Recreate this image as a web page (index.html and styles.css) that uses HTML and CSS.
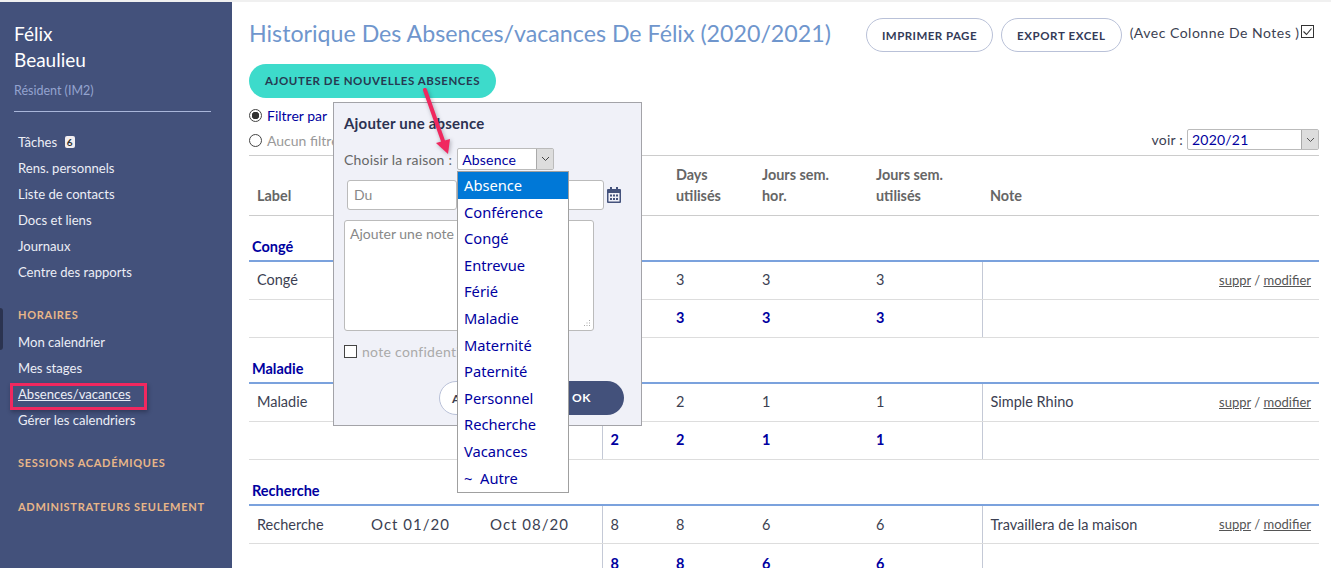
FILE: index.html
```html
<!DOCTYPE html>
<html>

  <head>
    <meta charset="UTF-8">
    <title>Historique des absences</title>
    <link rel="stylesheet" href="styles.css">
  </head>

  <body>
    <div id="wrap">
      <div id="side">
        <div class="who">Félix<br>Beaulieu</div>
        <div class="role">Résident (IM2)</div>
        <div class="side-line"></div>
        <ul class="nav">
          <li>Tâches <span class="badge">6</span></li>
          <li>Rens. personnels</li>
          <li>Liste de contacts</li>
          <li>Docs et liens</li>
          <li>Journaux</li>
          <li>Centre des rapports</li>
        </ul>
        <div class="nav-title first">HORAIRES</div>
        <ul class="nav">
          <li>Mon calendrier</li>
          <li>Mes stages</li>
          <li class="current">Absences/vacances</li>
          <li>Gérer les calendriers</li>
        </ul>
        <div class="nav-title second">SESSIONS ACADÉMIQUES</div>
        <div class="nav-title third">ADMINISTRATEURS SEULEMENT</div>
        <div class="side-tab"></div>
        <div class="mark"></div>
      </div>

      <div id="main">
        <div class="top">
          <h1>Historique Des Absences/vacances De Félix (2020/2021)</h1>
          <div class="btn print">IMPRIMER PAGE</div>
          <div class="btn">EXPORT EXCEL</div>
          <div class="notes">(Avec Colonne De Notes )<span class="tick"><svg width="13" height="13" viewBox="0 0 13 13"><rect x="0.5" y="0.5" width="12" height="12" fill="#fff" stroke="#333"/><path d="M2.5 6.5l3 3 5-6" fill="none" stroke="#333" stroke-width="1.1"/></svg></span></div>
        </div>
        <div class="add">AJOUTER DE NOUVELLES ABSENCES</div>
        <div class="filters">
          <div class="radios">
            <div class="radio-row on"><span class="radio"></span>Filtrer par</div>
            <div class="radio-row"><span class="radio"></span>Aucun filtre</div>
          </div>
          <div class="voir">voir :
            <div class="pick year"><span>2020/21</span><span class="pick-arrow"><svg width="9" height="6" viewBox="0 0 9 6"><path d="M1 1l3.5 3.5L8 1" fill="none" stroke="#555"/></svg></span></div>
          </div>
        </div>

        <table class="list">
          <colgroup>
            <col class="c-label"><col class="c-date"><col class="c-date2"><col class="c-num"><col class="c-days"><col class="c-hor"><col class="c-use"><col>
          </colgroup>
          <tr class="head">
            <th>Label</th><th>Du</th><th>Au</th><th>Days</th><th>Days<br>utilisés</th><th>Jours sem.<br>hor.</th><th>Jours sem.<br>utilisés</th><th>Note</th>
          </tr>
          <tr class="group"><td colspan="8">Congé</td></tr>
          <tr>
            <td>Congé</td><td></td><td></td><td class="sep"></td><td>3</td><td>3</td><td>3</td>
            <td class="sep"><div class="cell-note"><span></span><a class="acts"><u>suppr</u> / <u>modifier</u></a></div></td>
          </tr>
          <tr class="sum">
            <td></td><td></td><td></td><td class="sep"></td><td>3</td><td>3</td><td>3</td><td class="sep"></td>
          </tr>
          <tr class="group"><td colspan="8">Maladie</td></tr>
          <tr>
            <td>Maladie</td><td></td><td></td><td class="sep"></td><td>2</td><td>1</td><td>1</td>
            <td class="sep"><div class="cell-note"><span>Simple Rhino</span><a class="acts"><u>suppr</u> / <u>modifier</u></a></div></td>
          </tr>
          <tr class="sum">
            <td></td><td></td><td></td><td class="sep">2</td><td>2</td><td>1</td><td>1</td><td class="sep"></td>
          </tr>
          <tr class="group"><td colspan="8">Recherche</td></tr>
          <tr class="low">
            <td>Recherche</td><td class="date">Oct 01/20</td><td class="date">Oct 08/20</td><td class="sep">8</td><td>8</td><td>6</td><td>6</td>
            <td class="sep"><div class="cell-note"><span>Travaillera de la maison</span><a class="acts"><u>suppr</u> / <u>modifier</u></a></div></td>
          </tr>
          <tr class="sum low">
            <td></td><td></td><td></td><td class="sep">8</td><td>8</td><td>6</td><td>6</td><td class="sep"></td>
          </tr>
        </table>
      </div>

      <!-- fenetre ajout -->
      <div id="dialog">
        <div class="dlg-title">Ajouter une absence</div>
        <div class="dlg-reason">Choisir la raison :
          <div class="pick reason"><span>Absence</span><span class="pick-arrow"><svg width="9" height="6" viewBox="0 0 9 6"><path d="M1 1l3.5 3.5L8 1" fill="none" stroke="#444"/></svg></span></div>
        </div>
        <div class="dlg-dates">
          <div class="field">Du</div>
          <div class="field wide"></div>
          <svg class="cal" width="14" height="16" viewBox="0 0 14 16"><path fill="#44527c" d="M3 0h2v2h4V0h2v2h2a1 1 0 0 1 1 1v12a1 1 0 0 1-1 1H1a1 1 0 0 1-1-1V3a1 1 0 0 1 1-1h2zM1.5 6v8.500h11V6z"/><path fill="#44527c" d="M3 7.500h2v2H3zM6 7.500h2v2H6zM9 7.500h2v2H9zM3 11h2v2H3zM6 11h2v2H6zM9 11h2v2H9z"/></svg>
        </div>
        <div class="note">Ajouter une note
          <svg class="grip" width="9" height="9" viewBox="0 0 9 9"><path fill="#aaa" d="M7 1h1v1H7zM4.500 3.500h1v1h-1zM7 3.500h1v1H7zM2 6h1v1H2zM4.500 6h1v1h-1zM7 6h1v1H7z"/></svg>
        </div>
        <div class="conf"><span class="box"></span>note confidentielle</div>
        <div class="dlg-btns">
          <div class="cancel">Annuler</div>
          <div class="ok">OK</div>
        </div>
      </div>

      <ul id="drop">
        <li class="sel">Absence</li>
        <li>Conférence</li>
        <li>Congé</li>
        <li>Entrevue</li>
        <li>Férié</li>
        <li>Maladie</li>
        <li>Maternité</li>
        <li>Paternité</li>
        <li>Personnel</li>
        <li>Recherche</li>
        <li>Vacances</li>
        <li>~&nbsp; Autre</li>
      </ul>

      <svg id="arrow" width="40" height="70" viewBox="0 0 40 70"><path d="M4 3l18 51" fill="none" stroke="#f0285f" stroke-width="4" stroke-linecap="round"/><path d="M15 56l14-4-2 15z" fill="#f0285f"/></svg>
    </div>
  </body>

</html>
```

FILE: styles.css
```css
html, body {
  margin: 0;
  padding: 0;
}

body {
  font-family: "Lato", "Noto Sans", sans-serif;
  font-size: 14px;
  color: #3c3f52;
  background: #fff;
}

#wrap {
  position: relative;
  display: flex;
  width: 1331px;
  height: 568px;
  overflow: hidden;
  border-top: 2px solid #f0f0f0;
  box-sizing: border-box;
}

/* menu gauche */
#side {
  position: relative;
  width: 232px;
  flex-shrink: 0;
  padding: 19px 21px 0 14px;
  box-sizing: border-box;
  background: #43517b;
  color: #eceef6;
}

.who {
  font-size: 19px;
  line-height: 26px;
  color: #fff;
}

.role {
  margin-top: 9px;
  font-size: 12.500px;
  line-height: 18px;
  color: #94a3cf;
}

.side-line {
  height: 1px;
  margin: 11px 0 0;
  background: #a9b6da;
}

.nav {
  list-style: none;
  margin: 0;
  padding: 0 0 0 4px;
}

.side-line + .nav {
  margin-top: 17px;
}

.nav li {
  height: 26px;
  font-size: 13.100px;
  line-height: 26px;
  white-space: nowrap;
}

.nav .current {
  text-decoration: underline;
}

.badge {
  display: inline-block;
  width: 10px;
  height: 12px;
  margin-left: 4px;
  border-radius: 2px;
  background: #f2eef0;
  color: #333;
  font-size: 10px;
  font-weight: 700;
  line-height: 12px;
  text-align: center;
  vertical-align: 1px;
}

.nav-title {
  padding-left: 4px;
  font-size: 11px;
  font-weight: 700;
  line-height: 16px;
  letter-spacing: 0.7px;
  color: #e8b688;
  white-space: nowrap;
}

.nav-title.first {
  margin: 22px 0 6px;
}

.nav-title.second {
  margin-top: 22px;
}

.nav-title.third {
  margin-top: 28px;
}

.side-tab {
  position: absolute;
  left: 0;
  top: 306px;
  width: 3px;
  height: 42px;
  border-radius: 0 3px 3px 0;
  background: #2b3350;
}

.mark {
  position: absolute;
  left: 10px;
  top: 381px;
  width: 137px;
  height: 27px;
  box-sizing: border-box;
  border: 3px solid #f0285f;
  box-shadow: 1px 2px 4px rgba(20, 20, 40, 0.4);
}

/* contenu */
#main {
  flex: 1;
  min-width: 0;
  padding: 0 12px 0 17px;
}

.top {
  display: flex;
  align-items: flex-start;
  height: 62px;
}

h1 {
  margin: 16px 0 0;
  width: 617px;
  font-size: 23.200px;
  font-weight: 400;
  line-height: 30px;
  color: #6f96cd;
  white-space: nowrap;
}

.btn {
  height: 32px;
  margin: 16px 8px 0 0;
  padding: 0 15px;
  border: 1px solid #b9c1d8;
  border-radius: 17px;
  font-size: 11.500px;
  font-weight: 700;
  line-height: 33px;
  letter-spacing: 0.6px;
  color: #343b58;
  white-space: nowrap;
}

.btn.print {
  letter-spacing: 0.45px;
}

.notes {
  margin: 22px 0 0 0;
  font-size: 14px;
  line-height: 18px;
  letter-spacing: 0.5px;
  white-space: nowrap;
}

.tick {
  display: inline-block;
  margin-left: 1px;
  vertical-align: 0;
}

.add {
  width: 247px;
  height: 34px;
  border-radius: 17px;
  background: #3ddbcb;
  color: #263a52;
  font-size: 11.500px;
  font-weight: 700;
  line-height: 34px;
  letter-spacing: 0.55px;
  text-align: center;
  white-space: nowrap;
}

.filters {
  display: flex;
  justify-content: space-between;
  align-items: flex-end;
  height: 57px;
  border-bottom: 1px solid #ccc;
}

.radios {
  padding-bottom: 2px;
}

.radio-row {
  display: flex;
  align-items: center;
  height: 25px;
  color: #999;
}

.radio-row.on {
  color: #0000a0;
}

.radio {
  width: 11px;
  height: 11px;
  margin-right: 5px;
  border: 1px solid #444;
  border-radius: 50%;
  background: #fff;
}

.on .radio {
  background: radial-gradient(circle, #333 3.500px, #fff 4px);
}

.voir {
  display: flex;
  align-items: center;
  padding-bottom: 5px;
  font-size: 14px;
  letter-spacing: 0.2px;
}

.pick {
  display: flex;
  justify-content: space-between;
  box-sizing: border-box;
  background: #fff;
  border: 1px solid #bbb;
  border-radius: 2px;
  color: #0000a0;
  font-size: 14px;
}

.pick span:first-child {
  padding-left: 4px;
}

.pick-arrow {
  display: flex;
  align-items: center;
  justify-content: center;
  width: 16px;
  background: #ddd;
  border-left: 1px solid #aaa;
}

.year {
  width: 132px;
  height: 21px;
  margin-left: 4px;
  line-height: 19px;
}

.list {
  width: 1070px;
  table-layout: fixed;
  border-collapse: collapse;
}

.c-label { width: 114px; }
.c-date { width: 119px; }
.c-date2 { width: 120px; }
.c-num { width: 66px; }
.c-days { width: 86px; }
.c-hor { width: 114px; }
.c-use { width: 114px; }

.list th {
  height: 59px;
  padding: 0 8px 9px;
  border-bottom: 1px solid #ccc;
  font-size: 14.400px;
  line-height: 21px;
  font-weight: 700;
  color: #666;
  text-align: left;
  vertical-align: bottom;
  box-sizing: border-box;
}

.list td {
  height: 38px;
  padding: 0 8px 1px;
  border-bottom: 1px solid #ddd;
  box-sizing: border-box;
  font-size: 14.500px;
  white-space: nowrap;
}

.list .low td {
  padding-bottom: 0;
}

.list .sum.low td {
  padding-top: 2px;
}

.list .date {
  font-size: 15px;
  letter-spacing: 1px;
}

.list .group td {
  height: 46px;
  padding: 0 3px 5px;
  border-bottom: 2px solid #7ba2dd;
  font-weight: 700;
  color: #0000a0;
  vertical-align: bottom;
}

.list .sep {
  border-left: 1px solid #c4c9d6;
}

.sum td {
  font-weight: 700;
  color: #0000a0;
}

.cell-note {
  display: flex;
  justify-content: space-between;
  align-items: center;
}

.acts {
  font-size: 13px;
  color: #555;
}

/* fenetre */
#dialog {
  position: absolute;
  left: 333px;
  top: 100px;
  width: 309px;
  height: 324px;
  box-sizing: border-box;
  padding: 10px 10px 0;
  background: #f0f1f8;
  border: 1px solid #a3a3a8;
}

.dlg-title {
  font-size: 15px;
  font-weight: 700;
  line-height: 20px;
  color: #2c3252;
  letter-spacing: 0.2px;
}

.dlg-reason {
  display: flex;
  align-items: center;
  margin-top: 15px;
  color: #666;
  letter-spacing: 0.2px;
}

.reason {
  width: 97px;
  height: 22px;
  margin-left: 5px;
  line-height: 21px;
}

.dlg-dates {
  display: flex;
  align-items: center;
  gap: 0;
  margin: 10px 0 0 3px;
}

.field {
  width: 110px;
  height: 30px;
  box-sizing: border-box;
  padding-left: 6px;
  border: 1px solid #bbb;
  border-radius: 3px;
  background: #fff;
  color: #888;
  line-height: 28px;
}

.field.wide {
  width: 147px;
}

.cal {
  margin-left: 3px;
}

.note {
  position: relative;
  width: 250px;
  height: 111px;
  margin-top: 10px;
  box-sizing: border-box;
  padding: 4px 5px;
  border: 1px solid #bbb;
  border-radius: 3px;
  background: #fff;
  color: #888;
}

.grip {
  position: absolute;
  right: 2px;
  bottom: 2px;
}

.conf {
  display: flex;
  align-items: center;
  height: 18px;
  margin-top: 11px;
  color: #aaa;
  letter-spacing: 0.3px;
  white-space: nowrap;
}

.box {
  width: 11px;
  height: 11px;
  margin-right: 5px;
  border: 1px solid #444;
  background: #fff;
}

.dlg-btns {
  display: flex;
  justify-content: flex-end;
  margin: 21px 7px 0 0;
}

.cancel, .ok {
  height: 34px;
  box-sizing: border-box;
  border-radius: 17px;
  font-size: 12px;
  font-weight: 700;
  line-height: 33px;
  letter-spacing: 0.6px;
}

.cancel {
  width: 110px;
  padding-left: 12px;
  border: 1px solid #b9c1d8;
  background: #fff;
}

.ok {
  width: 75px;
  padding-left: 23px;
  background: #43517b;
  color: #fff;
}

#drop {
  position: absolute;
  left: 457px;
  top: 169px;
  width: 112px;
  margin: 0;
  padding: 0 0 1px;
  box-sizing: border-box;
  list-style: none;
  background: #fff;
  border: 1px solid #a0a0a0;
  color: #0000a0;
  font-family: "Noto Sans", sans-serif;
  font-size: 14.700px;
}

#drop li {
  height: 26.600px;
  padding-left: 6px;
  line-height: 27px;
}

#drop .sel {
  background: #0078d7;
  color: #fff;
}

#arrow {
  position: absolute;
  left: 421px;
  top: 85px;
  filter: drop-shadow(1px 1px 2px rgba(30, 30, 50, 0.35));
}
```
